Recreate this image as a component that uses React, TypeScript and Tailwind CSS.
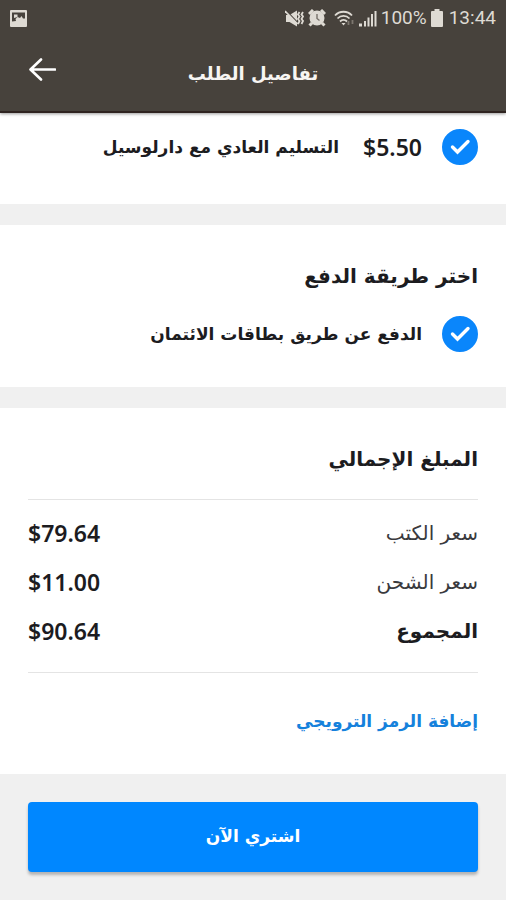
import React from 'react';

const PRICE_FONT = "font-['Noto_Sans','DejaVu_Sans',sans-serif]";

interface TotalRow {
  label: string;
  amount: string;
  strong?: boolean;
}

const totals: TotalRow[] = [
  { label: 'سعر الكتب', amount: '$79.64' },
  { label: 'سعر الشحن', amount: '$11.00' },
  { label: 'المجموع', amount: '$90.64', strong: true }
];

const StatusBar: React.FC = () => (
  <div dir="ltr" className="flex h-9 items-center justify-between px-2.5 text-[#dedad3]">
    <svg width="17" height="17" viewBox="0 0 17 17" aria-hidden="true">
      <rect width="17" height="17" rx="1" fill="currentColor" />
      <path d="M2 2.500h13v6h-2l-1.500-2.500-1.500 2-2.500-1-2 2L6 11 2 11.500z" fill="#47423c" />
      <path d="M4 4.500h3.500v2.500L4 8z" fill="currentColor" />
    </svg>
    <div className="flex items-center">
      {/* muted / vibrate */}
      <svg width="19" height="17" viewBox="0 0 19 17" className="mr-1" aria-hidden="true">
        <path d="M1 5h3.500L12 0.500v16L4.500 12H1z" fill="currentColor" />
        <path d="M2 1.500L13 13" stroke="#47423c" strokeWidth="1.300" />
        <path d="M0 1l12.500 13" stroke="currentColor" strokeWidth="1.800" />
        <path d="M14.500 2l-1.500 2.500 1.500 2-1.500 2.500 1.500 2-1.500 3M18 2l-1.500 2.500 1.500 2-1.500 2.500 1.500 2-1.500 3" fill="none" stroke="currentColor" strokeWidth="1.800" />
      </svg>
      <svg width="18" height="18" viewBox="0 0 18 18" className="mr-2" aria-hidden="true">
        <circle cx="9" cy="9" r="7.500" fill="currentColor" />
        <path d="M1 5l4-4M17 5l-4-4M4 14l-2.500 2.500M14 14l2.500 2.500" stroke="currentColor" strokeWidth="3" />
        <path d="M9 5v4.500l2.500 2" fill="none" stroke="#77716a" strokeWidth="1.400" />
      </svg>
      <svg width="21" height="17" viewBox="0 0 21 17" className="mr-1" aria-hidden="true">
        <g fill="none" stroke="currentColor" strokeWidth="1.800">
          <path d="M1 5.500c4.500-5 12.500-5 17 0" />
          <path d="M3.500 8.500c3.300-3.500 8.700-3.500 12 0" />
          <path d="M6 11.500c2-2 5-2 7 0" />
        </g>
        <path d="M7.500 13h4l-2 2.500z" fill="currentColor" />
        <path d="M14.500 11v4M18.500 10v4" stroke="#7d776f" strokeWidth="1.800" />
      </svg>
      <svg width="18" height="17" viewBox="0 0 18 17" className="mr-1" fill="currentColor" aria-hidden="true">
        <path d="M0 13.500h3v3H0zM5 11h2v5.500H5zM8.500 7.500h2v9h-2zM12 4h2v12.500h-2zM15.500 1h2v15.500h-2z" />
      </svg>
      <span className="mr-1 font-['Roboto',sans-serif] text-[19px] leading-6">100%</span>
      <svg width="12" height="18" viewBox="0 0 12 18" className="mr-1.5" fill="currentColor" aria-hidden="true">
        <path d="M3.500 0h5v2H11a1 1 0 0 1 1 1v14a1 1 0 0 1-1 1H1a1 1 0 0 1-1-1V3a1 1 0 0 1 1-1h2.500z" />
      </svg>
      <span className="font-['Roboto',sans-serif] text-[19px] leading-6">13:44</span>
    </div>
  </div>
);

const Header: React.FC = () => (
  <header className="relative bg-[#47423c] shadow-[0_1px_3px_rgba(0,0,0,0.4)]">
    <StatusBar />
    <div dir="ltr" className="grid h-[77px] grid-cols-[1fr_auto_1fr] items-center border-b-2 border-[#2f2421] px-7">
      <button type="button" aria-label="رجوع" className="mb-2 justify-self-start text-white">
        <svg width="28" height="26" viewBox="0 0 28 26" fill="none" stroke="currentColor" strokeWidth="2.600" strokeLinecap="round" strokeLinejoin="round">
          <path d="M27 12.500H3M13 2.500L2.500 12.500 13 22.500" />
        </svg>
      </button>
      <h1 dir="rtl" className="text-[18px] leading-8 font-bold text-[#f7f5f2]">تفاصيل الطلب</h1>
    </div>
  </header>
);

interface OptionProps {
  name: string;
  label: string;
  price?: string;
}

const Option: React.FC<OptionProps> = ({ name, label, price }) => (
  <label className="flex items-center">
    <span className="ml-5 grid shrink-0">
      <input
        type="radio"
        name={name}
        defaultChecked
        className="col-start-1 row-start-1 size-9 appearance-none rounded-full border-2 border-[#0a86fb] checked:bg-[#0a86fb]"
      />
      <svg
        viewBox="0 0 36 36"
        className="pointer-events-none col-start-1 row-start-1 size-9 text-white"
        fill="none"
        stroke="currentColor"
        strokeWidth="3.400"
        strokeLinecap="round"
        aria-hidden="true"
      >
        <path d="M10.500 18l5 5L26 12.500" />
      </svg>
    </span>
    {price && (
      <span dir="ltr" className={`ml-6 text-[23px] leading-8 font-semibold ${PRICE_FONT}`}>{price}</span>
    )}
    <span className="text-[17px] leading-8 font-bold whitespace-nowrap">{label}</span>
  </label>
);

const App: React.FC = () => (
  <div dir="rtl" lang="ar" className="min-h-screen bg-[#f0f0f0] font-['DejaVu_Sans',sans-serif] text-[#1c1c1f]">
    <Header />
    <main>
      <section className="bg-white px-7 pt-4 pb-[39px]">
        <Option name="delivery" label="التسليم العادي مع دارلوسيل" price="$5.50" />
      </section>

      <section className="mt-[21px] bg-white px-7 pt-[35px] pb-[35px]">
        <h2 className="mb-6 text-[20px] leading-8 font-bold">اختر طريقة الدفع</h2>
        <Option name="payment" label="الدفع عن طريق بطاقات الائتمان" />
      </section>

      <section className="mt-[21px] bg-white px-7 pt-[35px] pb-[37px]">
        <h2 className="mb-6 text-[20px] leading-8 font-bold">المبلغ الإجمالي</h2>
        <div className="border-y border-[#e4e4e4] pt-2 pb-[17px]">
          <table className="w-full">
            <tbody>
              {totals.map(row => (
                <tr key={row.label} className="h-[49px]">
                  <th
                    scope="row"
                    className={`text-right text-[20px] leading-8 ${row.strong ? 'font-bold' : 'font-normal text-[#3a3a3d]'}`}
                  >
                    {row.label}
                  </th>
                  <td dir="ltr" className={`text-left text-[23px] leading-8 font-semibold ${PRICE_FONT}`}>
                    {row.amount}
                  </td>
                </tr>
              ))}
            </tbody>
          </table>
        </div>
        <a href="#promo" className="mt-8 block text-[17px] leading-8 font-bold text-[#1581dc]">
          إضافة الرمز الترويجي
        </a>
      </section>
    </main>
    <footer className="p-7">
      <button
        type="button"
        className="h-[70px] w-full rounded-[4px] bg-[#0087ff] text-[17px] font-bold text-white shadow-[0_3px_3px_rgba(0,0,0,0.25)]"
      >
        اشتري الآن
      </button>
    </footer>
  </div>
);

export default App;
